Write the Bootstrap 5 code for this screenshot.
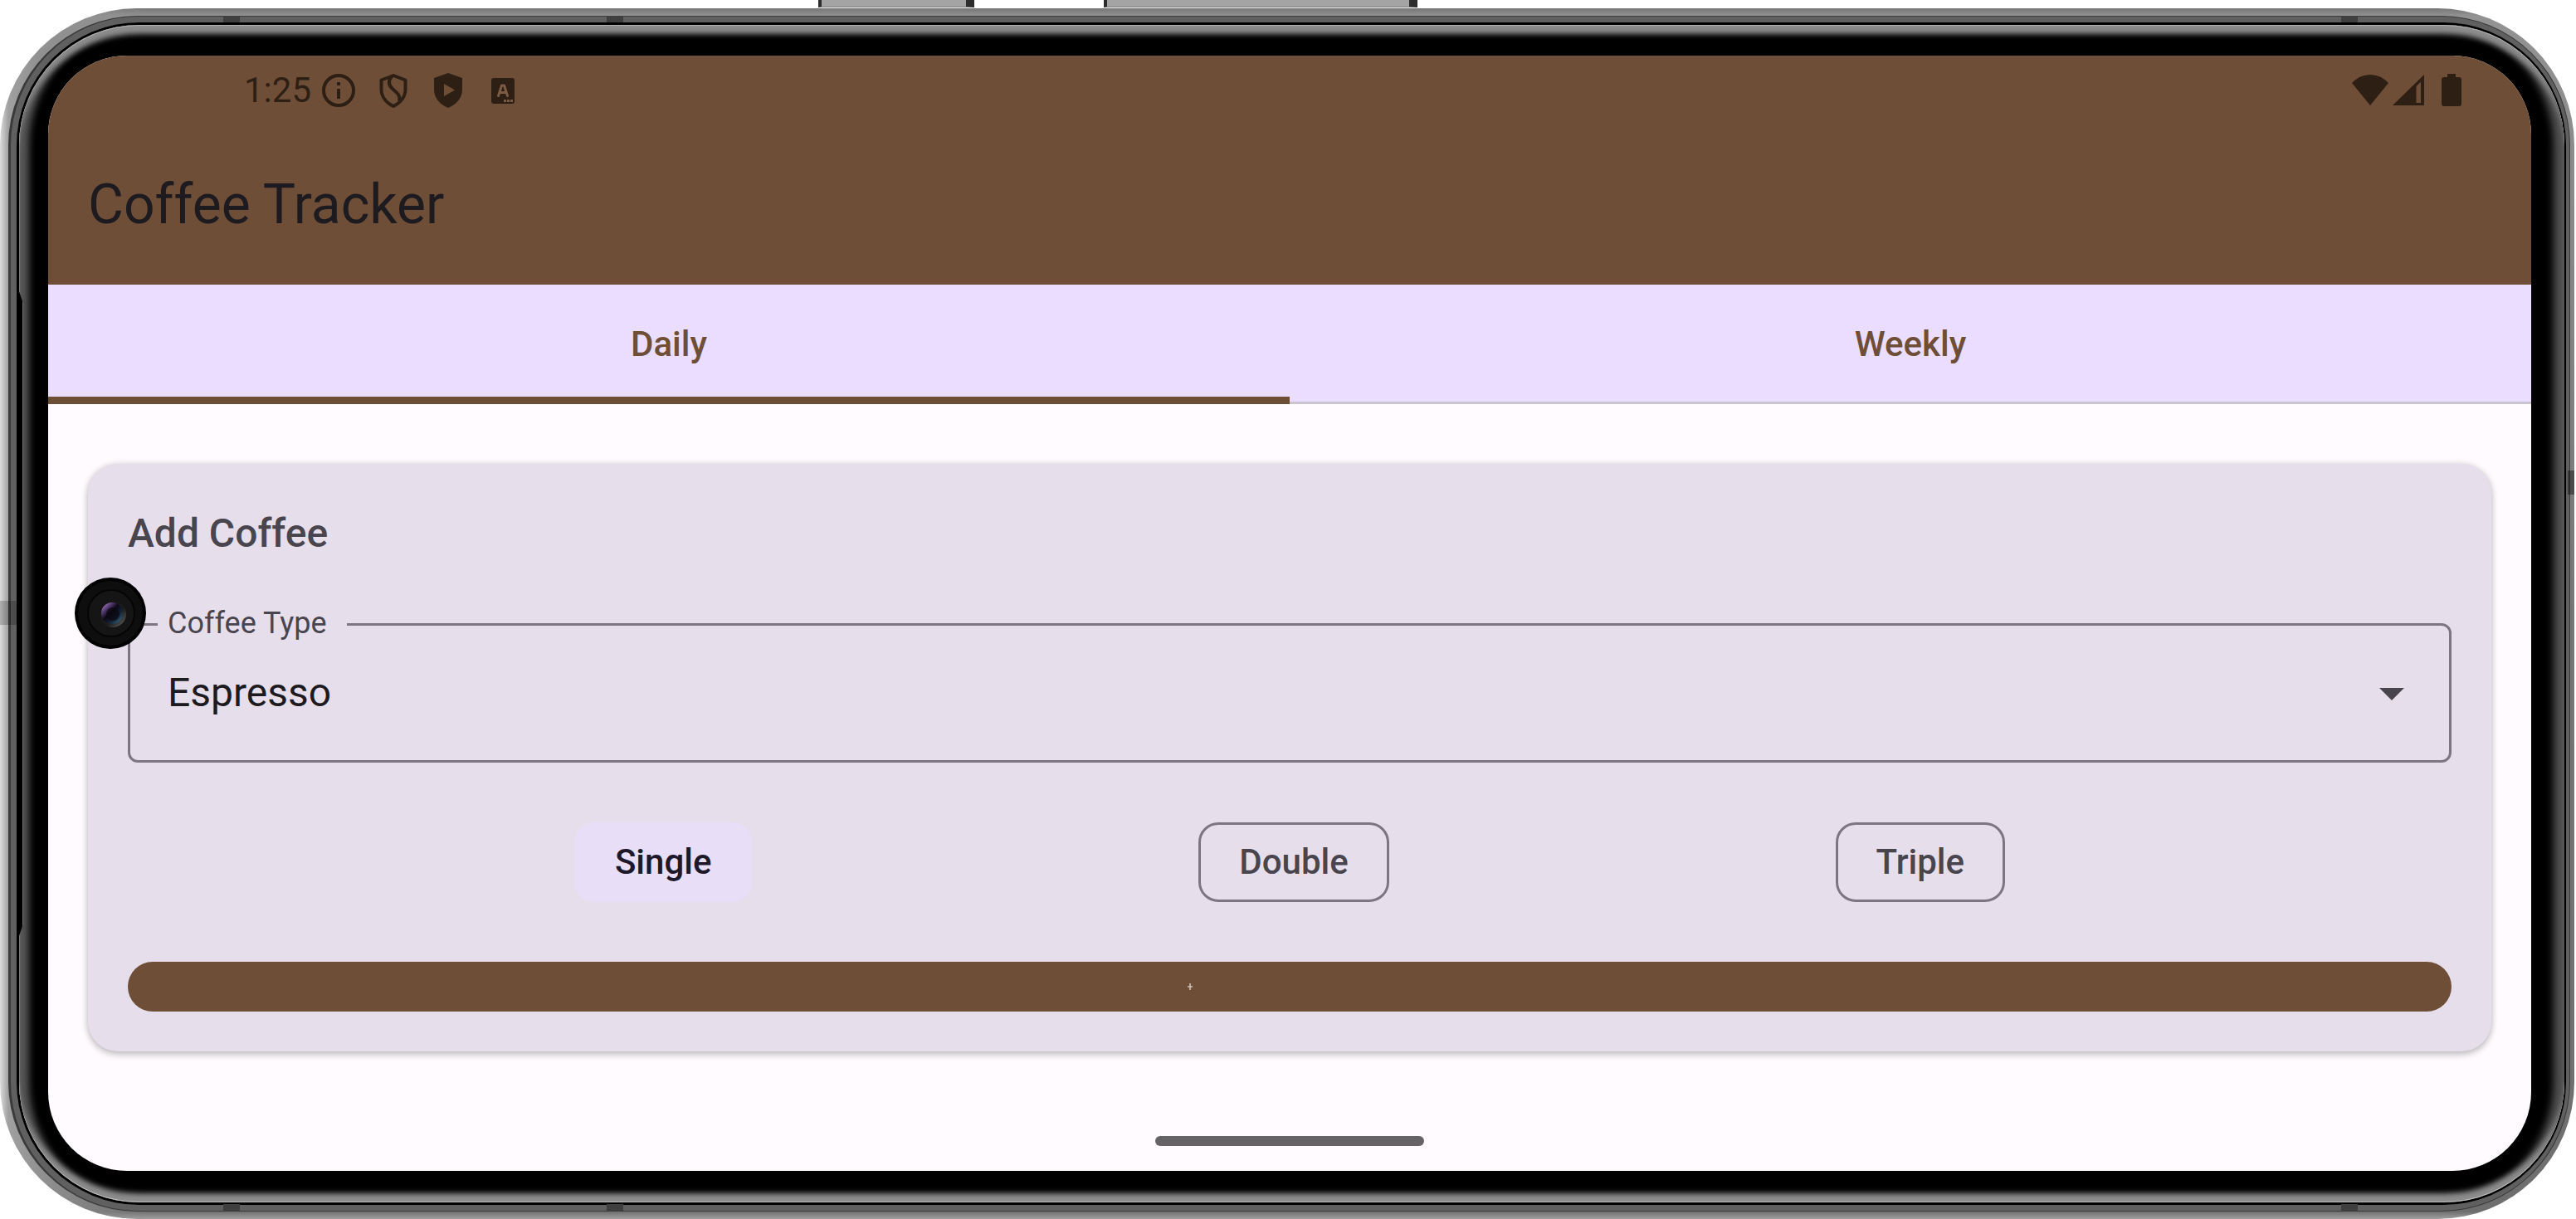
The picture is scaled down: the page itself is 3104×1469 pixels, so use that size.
<!DOCTYPE html>
<html lang="en">
<head>
<meta charset="utf-8">
<meta name="viewport" content="width=device-width, initial-scale=1">
<title>Coffee Tracker</title>
<link href="https://cdn.jsdelivr.net/npm/bootstrap@5.3.0/dist/css/bootstrap.min.css" rel="stylesheet">
<style>
  :root {
    --coffee: #6f4e37;
    --status-ink: #2e1f15;
    --ink: #1d1b20;
    --ink-soft: #49454f;
    --outline: #7c7583;
    --card-fill: #e6dfeb;
    --screen-fill: #fffbff;
  }
  body { font-family: Roboto, "Liberation Sans", sans-serif; background: #fff; color: var(--ink); }

  /* phone body, from the outer rim inwards */
  .side-keys { height: 10px; padding-left: 986px; gap: 156px; }
  .side-key { height: 9px; background: #a4a4a4; border: solid #2c2c2c; border-width: 0 10px 0 4px; border-bottom: 1px solid #777; }
  .key-short { width: 188px; }
  .key-long { width: 378px; }
  .shell-rim { border-radius: 165px; padding: 9px 5px 9px 10px; margin-right: 2px;
    background: linear-gradient(90deg, #dcdcdc 0, #a0a0a0 10px, #909090 50px, transparent 180px),
                linear-gradient(#777 0, #929292 9px, #777 50%, #6e6e6e calc(100% - 9px), #a0a0a0 100%); }
  .shell-band { border-radius: 156px; padding: 7px 4px 7px 7px; background: #606060; border: 1px solid #3a3a3a; border-left-width: 3px; }
  .shell-seam { border-radius: 148px; padding: 3px 2px 3px 3px; background: #000; }
  .shell-bevel { border-radius: 145px; padding: 37px 40px 38px 35px; background: #000;
    box-shadow: inset 0 1px 0 #b4b4b4, inset 0 -1px 0 #c0c0c0, inset 1px 0 0 #777, inset -1px 0 0 #555,
      inset 0 14px 6px -3px #8c8c8c, inset 0 -14px 6px -3px #8c8c8c,
      inset 17px 0 9px -5px #555, inset -17px 0 10px -4px #505050; }
  .band-mark { position: absolute; background: #3f3f3f; }
  .mark-top { top: 9px; width: 20px; height: 8px; }
  .mark-bottom { bottom: 10px; width: 20px; height: 8px; }
  .mark-a { left: 269px; } .mark-b { left: 731px; } .mark-c { right: 261px; }
  .mark-left { left: 0; top: 714px; width: 20px; height: 29px; background: #0003; }
  .mark-right { right: 0; top: 557px; width: 8px; height: 29px; background: #0006; }
  .seam-notch { position: absolute; left: 22px; top: 338px; bottom: 338px; width: 6px; background: linear-gradient(90deg, #000 5px, #6c6c6c 5px);
    clip-path: polygon(0 0, 100% 18px, 100% calc(100% - 18px), 0 100%); }
  .lens { position: absolute; left: 90px; top: 686px; width: 86px; height: 86px; }

  .app-screen { border-radius: 95px; background: var(--screen-fill); }
  .status-row { height: 84px; padding: 0 84px 0 236px; color: var(--status-ink); font-size: 42px; line-height: 48px; }
  .status-row svg { display: block; fill: currentColor; }
  .status-icons { gap: 18px; margin-left: 9px; }
  .battery-icon { margin-left: 21px; }
  .app-top { background: var(--coffee); }
  .app-title { height: 192px; padding: 0 48px; font-size: 66px; line-height: 84px; }
  .tab-row { background: #eaddff; }
  .tab-row .nav-link { width: 100%; height: 144px; padding: 0; border: 0; border-radius: 0; background: transparent; box-shadow: inset 0 -3px #cac4d0; font-size: 42px; line-height: 60px; font-weight: 500; color: var(--coffee); }
  .tab-row .nav-link.active { box-shadow: inset 0 -9px var(--coffee); }

  .app-body { padding: 72px 48px 0; }
  .coffee-card { background: var(--card-fill); border-radius: 36px; padding: 48px; box-shadow: 0 4px 8px #0003, 0 0 8px #0002; }
  .coffee-card h2 { margin: 0 0 72px; font-size: 48px; line-height: 72px; font-weight: 500; color: var(--ink-soft); }
  .type-field { margin-bottom: 48px; }
  .type-field label { position: absolute; top: -24px; left: 36px; padding: 0 24px 0 12px; background: var(--card-fill); font-size: 36px; line-height: 48px; color: var(--ink-soft); }
  .type-field select { display: block; width: 100%; height: 168px; padding: 0 144px 0 45px; appearance: none; background: transparent; border: 3px solid var(--outline); border-radius: 12px; font-size: 48px; line-height: 72px; color: var(--ink); }
  .type-field svg { position: absolute; right: 36px; top: 48px; width: 72px; height: 72px; fill: var(--ink-soft); pointer-events: none; }
  .size-row { height: 144px; margin-bottom: 48px; }
  .size-row .btn { display: block; height: 96px; padding: 0 46px; border: 3px solid var(--outline); border-radius: 24px; font-size: 42px; line-height: 90px; font-weight: 500; color: var(--ink-soft); }
  .size-row .btn-check:checked + .btn { background: #e8def8; border-color: #e8def8; color: #1d192b; }
  .add-btn { height: 60px; padding: 0 240px 0 0; border: 0; border-radius: 30px; background: var(--coffee); }
  .add-btn:hover { background: var(--coffee); }
  .home-pill { width: 324px; height: 12px; border-radius: 6px; background: #666367; margin: auto auto 30px; }
</style>
<script src="https://cdn.jsdelivr.net/npm/bootstrap@5.3.0/dist/js/bootstrap.bundle.min.js"></script>
</head>
<body class="min-vh-100 d-flex flex-column">
<div class="side-keys d-flex flex-shrink-0">
  <div class="side-key key-short"></div>
  <div class="side-key key-long"></div>
</div>
<div class="shell-rim position-relative flex-grow-1 d-flex flex-column">
  <div class="shell-band flex-grow-1 d-flex flex-column">
    <div class="shell-seam flex-grow-1 d-flex flex-column">
      <div class="shell-bevel flex-grow-1 d-flex flex-column">
        <div class="app-screen flex-grow-1 d-flex flex-column overflow-hidden">
          <header class="app-top">
            <div class="status-row d-flex align-items-center">
              <span>1:25</span>
              <div class="status-icons d-flex">
                <svg width="48" height="48" viewBox="0 0 48 48"><circle cx="24" cy="24" r="18" fill="none" stroke="currentColor" stroke-width="4"/><path d="M22 14h4v4h-4zM22 22h4v12h-4z"/></svg>
                <svg width="48" height="48" viewBox="0 0 48 48"><g fill="none" stroke="currentColor" stroke-width="4" stroke-linejoin="round"><path d="M24 6l14.500 5.500v11c0 9-6 16.500-14.500 20.500-8.500-4-14.500-11.500-14.500-20.500v-11z"/><path d="M22 7c-5 6-4 11 2 16 5 4 9 8 7 14"/></g></svg>
                <svg width="48" height="48" viewBox="0 0 48 48"><path fill-rule="evenodd" d="M24 3l17 6v14c0 10-7 18-17 22C14 41 7 33 7 23V9zM19 16v15l13-7.500z"/></svg>
                <svg width="48" height="48" viewBox="0 0 48 48"><rect x="10" y="9" width="28" height="31" rx="3"/><g fill="none" stroke="#7b5b44" stroke-width="3" stroke-linecap="round" stroke-linejoin="round"><path d="M18.500 30.500l4-12.500h3l4 12.500M20 26.500h8"/></g><g fill="#7b5b44"><rect x="25" y="35" width="3" height="3"/><rect x="29" y="35" width="3" height="3"/><rect x="33" y="35" width="3" height="3"/></g></svg>
              </div>
              <div class="d-flex ms-auto">
                <svg width="46" height="48" viewBox="0 0 46 48"><path d="M1 15C13 1.500 33 1.500 45 15L23 42z"/></svg>
                <svg class="ms-1" width="38" height="48" viewBox="0 0 38 48"><path fill-rule="evenodd" d="M38 5v37H0zM28.500 19v20h5.500V13.500z"/></svg>
                <svg class="battery-icon" width="24" height="48" viewBox="0 0 24 48"><path d="M7 4h10v4h4q3 0 3 3v29q0 3-3 3H3q-3 0-3-3V11q0-3 3-3h4z"/></svg>
              </div>
            </div>
            <h1 class="app-title d-flex align-items-center m-0 fw-normal">Coffee Tracker</h1>
          </header>
          <ul class="nav nav-justified tab-row" role="tablist">
            <li class="nav-item" role="presentation"><button class="nav-link active" type="button" role="tab" aria-selected="true">Daily</button></li>
            <li class="nav-item" role="presentation"><button class="nav-link" type="button" role="tab" aria-selected="false">Weekly</button></li>
          </ul>
          <main class="app-body">
            <form class="coffee-card">
              <h2>Add Coffee</h2>
              <div class="type-field position-relative">
                <select id="coffeeType"><option selected>Espresso</option></select>
                <label for="coffeeType">Coffee Type</label>
                <svg viewBox="0 0 24 24" aria-hidden="true"><path d="M7 10l5 5 5-5z"/></svg>
              </div>
              <div class="size-row d-flex align-items-center justify-content-evenly">
                <div><input class="btn-check" type="radio" name="size" id="sizeSingle" checked><label class="btn" for="sizeSingle">Single</label></div>
                <div><input class="btn-check" type="radio" name="size" id="sizeDouble"><label class="btn" for="sizeDouble">Double</label></div>
                <div><input class="btn-check" type="radio" name="size" id="sizeTriple"><label class="btn" for="sizeTriple">Triple</label></div>
              </div>
              <button class="btn add-btn w-100 d-flex align-items-center justify-content-center" type="button" aria-label="Add">
                <svg width="8" height="8" viewBox="0 0 8 8"><path d="M4 0v8M1 4h6" stroke="#d0c5bc" stroke-width="1.500"/></svg>
              </button>
            </form>
          </main>
          <div class="home-pill"></div>
        </div>
      </div>
    </div>
  </div>
  <i class="band-mark mark-top mark-a"></i><i class="band-mark mark-top mark-b"></i><i class="band-mark mark-top mark-c"></i>
  <i class="band-mark mark-bottom mark-a"></i><i class="band-mark mark-bottom mark-b"></i><i class="band-mark mark-bottom mark-c"></i>
  <i class="band-mark mark-left"></i><i class="band-mark mark-right"></i>
  <i class="seam-notch"></i>
  <svg class="lens" viewBox="0 0 86 86" aria-hidden="true">
    <defs>
      <linearGradient id="glass" x1="0" y1="0" x2="1" y2="1"><stop offset="0" stop-color="#d9a0f0"/><stop offset=".25" stop-color="#5a3f78"/><stop offset=".45" stop-color="#0c0614"/><stop offset=".7" stop-color="#15283a"/><stop offset="1" stop-color="#3f7f9c"/></linearGradient>
      <linearGradient id="ring" x1="0" y1="0" x2="1" y2="1"><stop offset="0" stop-color="#111"/><stop offset=".6" stop-color="#1c1c1c"/><stop offset="1" stop-color="#666"/></linearGradient>
    </defs>
    <circle cx="43" cy="43" r="43"/><circle cx="43" cy="43" r="39" fill="#0e0e0e"/>
    <circle cx="44" cy="43" r="28" fill="#151515" stroke="#050505" stroke-width="2"/>
    <circle cx="46" cy="44" r="16" fill="url(#ring)"/><circle cx="45" cy="43" r="13" fill="url(#glass)"/>
    <circle cx="46" cy="44" r="8" fill="#0a0710" opacity=".7"/>
  </svg>
</div>
</body>
</html>
